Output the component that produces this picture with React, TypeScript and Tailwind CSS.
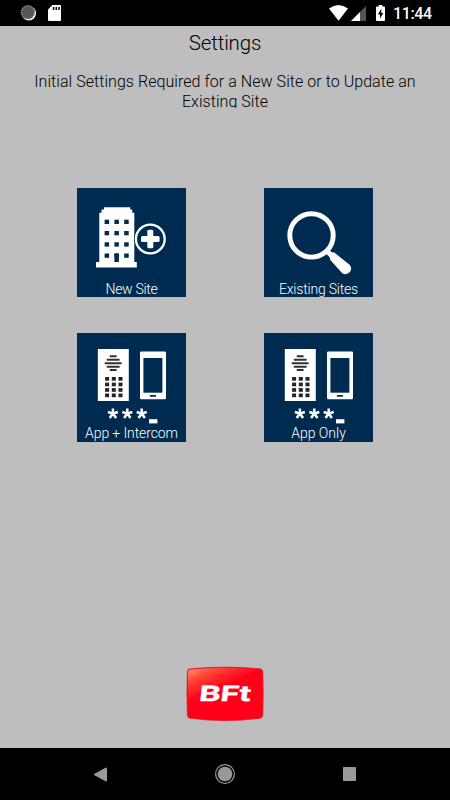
import type { ReactNode } from 'react';

const Building = () => (
  <>
    <path d="M27 19.3h26.2v2.2h2v3.3h2.1V74h2.5v5.5H19V74h3.3V24.8h2.2v-3.3H27z" fill="#fff" />
    {[31.7, 43, 54.3, 65.5].map((y) =>
      [27.6, 37.4, 47.2].map((x) => (
        <rect key={`${x}-${y}`} x={x} y={y} width="4.5" height="4.3" fill="#002b50" />
      ))
    )}
    <rect x="37.4" y="65.5" width="4.5" height="8.5" fill="#002b50" />
    <circle cx="73.3" cy="51" r="16.2" fill="#002b50" />
    <circle cx="73.3" cy="51" r="14.4" fill="none" stroke="#fff" strokeWidth="2.3" />
    <rect x="70.3" y="41.7" width="6" height="18.6" rx="1.5" fill="#fff" />
    <rect x="64" y="48" width="18.6" height="6" rx="1.5" fill="#fff" />
  </>
);

const Magnifier = () => (
  <>
    <circle cx="47.5" cy="47.4" r="21.7" fill="none" stroke="#fff" strokeWidth="4.9" />
    <path d="M62 62l7 7" stroke="#fff" strokeWidth="5" />
    <path
      d="M65.5 67.5q0-2.8 4.5-3.2L85.3 76.5q3.2 3.5.8 7.3q-3.6 3.8-7.8 1.4L66.5 72.2q-1-1.7-1-4.7z"
      fill="#fff"
    />
  </>
);

const bars = [
  [23.3, 3.5],
  [26.7, 6.5],
  [30.2, 8.5],
  [33.7, 6.5],
  [37.1, 3.5],
];

const Intercom = () => (
  <>
    <rect x="20.8" y="16" width="31" height="52" fill="#fff" />
    {bars.map(([y, half]) => (
      <rect key={y} x={36.2 - half} y={y - 1} width={half * 2} height="2" rx="0.6" fill="#303236" />
    ))}
    {[44, 49.6, 55.1, 60.5].map((y) =>
      [28.1, 34.8, 41.5].map((x) => (
        <rect key={`${x}-${y}`} x={x} y={y} width="4" height="3.7" fill="#222428" />
      ))
    )}
    <rect x="63" y="18.4" width="26" height="47.8" rx="1.2" fill="#fff" />
    <rect x="66.4" y="25" width="19" height="34.7" fill="#002b50" />
    <rect x="72.7" y="61.9" width="6.4" height="1.9" rx="0.9" fill="#002b50" />
    {[35.9, 50.3, 64.7].map((x) => (
      <path
        key={x}
        d={`M${x} 80.6v-5.2M${x} 80.6l5-1.6M${x} 80.6l3.2 4.3M${x} 80.6l-3.2 4.3M${x} 80.6l-5-1.6`}
        stroke="#fff"
        strokeWidth="2.5"
      />
    ))}
    <rect x="72" y="86.2" width="8.4" height="4.2" fill="#fff" />
  </>
);

const Tile = ({ label, text, children }: { label: string; text: string; children: ReactNode }) => (
  <button className="grid h-[109px] w-[109px] bg-[#002b50]">
    <svg viewBox="0 0 109 109" className="col-start-1 row-start-1 h-[109px] w-[109px]">
      {children}
    </svg>
    <span
      className={`col-start-1 row-start-1 self-end justify-self-center text-[14px] font-light whitespace-nowrap text-white ${text}`}
    >
      {label}
    </span>
  </button>
);

const StatusBar = () => (
  <header className="flex h-[26px] items-center justify-between bg-black pr-[18px] pl-[20px]">
    <div className="flex items-center gap-[12px]">
      <svg width="16" height="16" viewBox="0 0 16 16">
        <circle cx="8.8" cy="8.4" r="7.2" fill="#fff" />
        <circle cx="7.8" cy="7.2" r="7" fill="#555" />
        <circle cx="7.8" cy="7.2" r="6.4" fill="none" stroke="#8a8a8a" strokeWidth="1.4" strokeDasharray="1 1.1" />
      </svg>
      <svg width="13" height="16" viewBox="0 0 13 16">
        <path d="M4.5 0H12q1 0 1 1v14q0 1-1 1H1q-1 0-1-1V4.5z" fill="#fff" />
        <path d="M5.6 2v3M8.3 2v3M11 2v3" stroke="#000" strokeWidth="1.5" />
      </svg>
    </div>
    <div className="flex items-center">
      <svg width="19" height="16" viewBox="0 0 19 16">
        <path d="M9.5 15.8L0 3.6Q9.5-3.5 19 3.6z" fill="#fff" />
      </svg>
      <svg width="15" height="16" viewBox="0 0 15 16" className="ml-[3px]">
        <path d="M15 1v15H0z" fill="#555" />
        <path d="M9 7v9H0z" fill="#fff" />
      </svg>
      <svg width="9" height="16" viewBox="0 0 9 16" className="ml-[10px]">
        <path d="M2.7 0h3.6v1.5H8q1 0 1 1V15q0 1-1 1H1q-1 0-1-1V2.5q0-1 1-1h1.7z" fill="#fff" />
        <path d="M5.3 3.7L1.9 9.5H4v4.1L7.3 7.9H5.3z" fill="#000" />
      </svg>
      <span className="ml-[8px] w-[39px] pt-[2px] text-[16px] leading-4 font-medium tracking-[-0.4px] text-white">
        11:44
      </span>
    </div>
  </header>
);

const Logo = () => (
  <svg width="78" height="56" viewBox="0 0 78 56">
    <defs>
      <linearGradient id="shine" x1="0" y1="0" x2="0.5" y2="0.55">
        <stop offset="0" stopColor="#ff9a80" />
        <stop offset="0.4" stopColor="#ff4636" />
        <stop offset="1" stopColor="#ff0018" />
      </linearGradient>
    </defs>
    <path
      d="M4 2.8Q39-.6 74 2.8Q76.6 3 76.8 5.5Q77.6 28 76.8 49.5Q76.6 52 74 52.3Q39 57 4 52.3Q1.6 52 1.3 49.5Q.6 28 1.3 5.5Q1.5 3 4 2.8z"
      fill="#ff0018"
      stroke="#d8202c"
      strokeWidth="0.7"
    />
    <path d="M4.5 3.5Q39 .2 73 3.5Q56 13 38 17Q14 23 2 37V6Q2 3.7 4.5 3.5z" fill="url(#shine)" />
    <text
      x="12.5"
      y="35.2"
      textLength="52"
      lengthAdjust="spacingAndGlyphs"
      transform="translate(4.2 0) skewX(-7)"
      className="font-[Inter,sans-serif] text-[21px] font-bold"
      fill="#fff"
      stroke="#fff"
      strokeWidth="0.4"
    >
      BFt
    </text>
  </svg>
);

const NavBar = () => (
  <nav className="flex h-[52px] items-center justify-between bg-black pr-[94px] pl-[94px]">
    <svg width="13" height="15" viewBox="0 0 13 15">
      <path d="M12 .5q1-.4 1 .7v12.6q0 1.1-1 .7L.5 8.2q-1-.7 0-1.4z" fill="#999" />
    </svg>
    <svg width="20" height="20" viewBox="0 0 20 20">
      <circle cx="10" cy="10" r="9.4" fill="none" stroke="#999" strokeWidth="1.2" />
      <circle cx="10" cy="10" r="7.3" fill="#999" />
    </svg>
    <svg width="13" height="14" viewBox="0 0 13 14">
      <rect width="13" height="14" rx="0.7" fill="#999" />
    </svg>
  </nav>
);

export default function App() {
  return (
    <div className="flex h-[800px] w-[450px] flex-col bg-[#bebebe] font-[Roboto,sans-serif]">
      <StatusBar />
      <main className="flex flex-1 flex-col items-center">
        <h1 className="mt-[4px] text-[20.5px] leading-[26px] font-light tracking-[-0.15px] text-black">Settings</h1>
        <p className="mt-[16px] h-[36px] overflow-hidden text-center text-[16px] leading-5 font-light tracking-[0.05px] text-black">
          Initial Settings Required for a New Site or to Update an
          <br />
          Existing Site
        </p>
        <div className="mt-[80px] grid grid-cols-2 gap-x-[78px] gap-y-[36px]">
          <Tile label="New Site" text="leading-[15px] tracking-[-0.3px]">
            <Building />
          </Tile>
          <Tile label="Existing Sites" text="leading-[15px] tracking-[-0.2px]">
            <Magnifier />
          </Tile>
          <Tile label="App + Intercom" text="leading-[17px] tracking-[-0.1px]">
            <Intercom />
          </Tile>
          <Tile label="App Only" text="leading-[17px]">
            <Intercom />
          </Tile>
        </div>
        <div className="mt-auto mb-[26px]">
          <Logo />
        </div>
      </main>
      <NavBar />
    </div>
  );
}
